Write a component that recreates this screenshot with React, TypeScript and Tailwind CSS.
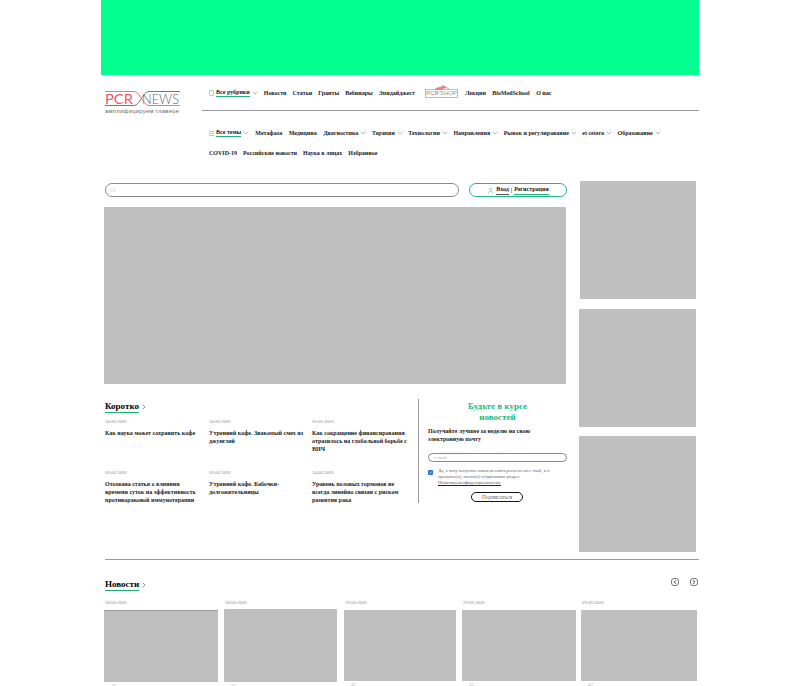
import {ChevronDown, ChevronLeft, ChevronRight, Search, User} from 'lucide-react';

const serif = {fontFamily: '"Liberation Serif", serif'};

const topNav = ['Новости', 'Статьи', 'Гранты', 'Вебинары', 'Эпидайджест'];
const topNavEnd = ['Лекции', 'BioMedSchool', 'О нас'];
const themes: [string, boolean][] = [
  ['Метафаза', false],
  ['Медицина', false],
  ['Диагностика', true],
  ['Терапия', true],
  ['Технологии', true],
  ['Направления', true],
  ['Рынок и регулирование', true],
  ['et cetera', true],
  ['Образование', true],
];
const extraNav = ['COVID-19', 'Российские новости', 'Наука в лицах', 'Избранное'];
const shortNews = [
  {date: '30.06.2026', title: 'Как наука может сохранить кофе'},
  {date: '30.06.2026', title: 'Утренний кофе. Знакомый смех из джунглей'},
  {date: '26.06.2026', title: 'Как сокращение финансирования отразилось на глобальной борьбе с ВИЧ'},
  {date: '26.06.2026', title: 'Отозвана статья о влиянии времени суток на эффективность противораковой иммунотерапии'},
  {date: '26.06.2026', title: 'Утренний кофе. Бабочки-долгожительницы'},
  {date: '24.06.2026', title: 'Уровень половых гормонов не всегда линейно связан с риском развития рака'},
];
const cards = [
  {date: '30.06.2026', cls: 'w-[114px] h-[72px] mt-0 border-t border-[#9a9a9a]', gap: 'mr-[6px]'},
  {date: '30.06.2026', cls: 'w-[113px] h-[73px] -mt-px rounded-[1px]', gap: 'mr-[7px]'},
  {date: '29.06.2026', cls: 'w-[112px] h-[71px] mt-0', gap: 'mr-[6px]'},
  {date: '29.06.2026', cls: 'w-[114px] h-[71px] mt-0', gap: 'mr-[5px]'},
  {date: '29.06.2026', cls: 'w-[116px] h-[71px] mt-0', gap: ''},
];

const Logo = () => (
  <svg width="76" height="24" viewBox="0 0 76 24" className="block">
    <path d="M0 1.5H29C35 1.5 38 15.5 44 15.5H75" fill="none" stroke="#f0656b" strokeWidth="0.9" />
    <path d="M0 15.5H29C35 15.5 38 1.5 44 1.5H75" fill="none" stroke="#666" strokeWidth="0.9" />
    <text x="0" y="13.5" fontFamily="Lato" fontSize="14" fill="#ee5560" textLength="28" lengthAdjust="spacingAndGlyphs">PCR</text>
    <text x="37" y="13.5" fontFamily="Lato" fontWeight="300" fontSize="14" fill="#666" textLength="37" lengthAdjust="spacingAndGlyphs">NEWS</text>
    <text x="0" y="22.5" fontFamily="Liberation Sans" fontSize="5.8" fill="#666" textLength="74" lengthAdjust="spacing">амплифицируем главное</text>
  </svg>
);

const ShopLogo = () => (
  <div className="relative w-[33px] h-[9px] border border-[#8fd4ab] flex items-center justify-center text-[6px] leading-none tracking-tight font-['Liberation_Sans'] font-normal text-[#999] ml-[10px] mr-[7px] shrink-0">
    <svg width="18" height="6" viewBox="0 0 18 6" className="absolute -top-[6px] left-[7px]">
      <path d="M1 6C4 2 8 4 10 1L13 3L17 5L12 4L8 6Z" fill="#ee7f88" />
    </svg>
    <span className="text-[#e6626b]">PC</span>
    <span className="text-[#3f8fd0]">R</span>
    <span>&nbsp;SHOP</span>
  </div>
);

const Chevron = () => <ChevronDown size={8} strokeWidth={1.1} className="text-[#333] ml-px shrink-0" />;

const Header = () => (
  <div className="flex pl-[4px]">
    <div className="w-[97px] pt-[15px] shrink-0"><Logo /></div>
    <div className="flex-1 min-w-0 text-[6px] leading-none font-bold text-[#1a1a2a] whitespace-nowrap">
      <div className="flex items-center h-[36px] border-b border-[#9a9a9a] pl-[7px] pt-[1px]">
        <span className="w-[5px] h-[6px] border border-[#9ed9b8] rounded-[1px] mr-[2px] shrink-0" />
        <span className="border-b border-[#1fae78] pb-px">Все рубрики</span>
        <Chevron />
        <div className="flex items-center gap-[6px] ml-[5px]">
          {topNav.map(item => <span key={item}>{item}</span>)}
        </div>
        <ShopLogo />
        <div className="flex items-center gap-[6.5px]">
          {topNavEnd.map(item => <span key={item}>{item}</span>)}
        </div>
      </div>
      <div className="flex items-center h-[10px] mt-[17px] pl-[7px]">
        <span className="flex flex-col gap-px w-[5px] mr-[2px] shrink-0">
          <i className="h-px bg-[#9ed9b8]" /><i className="h-px bg-[#9ed9b8]" /><i className="h-px bg-[#9ed9b8]" />
        </span>
        <span className="border-b border-[#1fae78] pb-px">Все темы</span>
        <Chevron />
        <div className="flex items-center gap-[6.5px] ml-[5px]">
          {themes.map(([name, more]) => (
            <span key={name} className={`flex items-center ${more ? '-mr-[2px]' : ''}`}>{name}{more && <Chevron />}</span>
          ))}
        </div>
      </div>
      <div className="flex items-center gap-[6px] h-[10px] mt-[10px] pl-[7px]">
        {extraNav.map(item => <span key={item}>{item}</span>)}
      </div>
    </div>
  </div>
);

const SideBoxes = () => (
  <div className="w-[117px] shrink-0 ml-[13px] mt-[23px]">
    <div className="h-[118px] ml-px bg-[#bfbfbf]" />
    <div className="h-[118px] mt-[10px] bg-[#bfbfbf]" />
    <div className="h-[116px] mt-[9px] bg-[#bfbfbf]" />
  </div>
);

const SectionTitle = ({title}: {title: string}) => (
  <div className="flex items-center">
    <span className="text-[9px] leading-[11px] font-bold text-black border-b border-[#1fae78]">{title}</span>
    <ChevronRight size={8} strokeWidth={1.5} className="ml-[1px] text-[#333]" />
  </div>
);

const Subscribe = () => (
  <div className="w-[148px] ml-[3px] border-l border-[#9a9a9a] pl-[9px] h-[104px] shrink-0">
    <div className="text-[9px] leading-[11px] font-bold text-[#19b97e] text-center pt-[2px] w-[139px]">
      Будьте в курсе<br />новостей
    </div>
    <div className="text-[6px] leading-[7.5px] font-bold text-[#222] mt-[5px]">
      Получайте лучшее за неделю на свою электронную почту
    </div>
    <div className="h-[9px] w-[139px] border border-[#888] rounded-full mt-[10px] text-[5px] leading-[7px] pl-[5px] text-[#aaa]">
      e-mail
    </div>
    <div className="flex mt-[6px]">
      <span className="w-[5px] h-[5px] bg-[#2f6fdc] rounded-[1px] shrink-0 mt-[2px] flex items-center justify-center text-white text-[4px] leading-none">✓</span>
      <div className="ml-[5px] text-[4.6px] leading-[6px] text-[#666] whitespace-nowrap">
        Да, я хочу получать новости сайта pcr.news по e-mail, и я<br />
        прочитал(а), понял(а) и принимаю раздел<br />
        <span className="border-b border-[#222] text-[#555]">Политика конфиденциальности.</span>
      </div>
    </div>
    <div className="w-[52px] h-[10px] mt-[6px] ml-[43px] border border-[#111] rounded-full text-center text-[5.5px] leading-[8px] text-[#666]">
      Подписаться
    </div>
  </div>
);

const MainColumn = () => (
  <div className="w-[462px] shrink-0 ml-[3px]">
    <div className="flex items-center mt-[25px] h-[14px]">
      <div className="w-[354px] h-[14px] ml-px shrink-0 border border-[#8a8a8a] rounded-full flex items-center pl-[4px] text-[#c4c4c4]">
        <Search size={6} strokeWidth={1.5} />
      </div>
      <div className="w-[98px] h-[14px] ml-[10px] shrink-0 border border-[#22b684] rounded-full flex items-center justify-center text-[6px] font-bold text-[#222] whitespace-nowrap">
        <User size={7} strokeWidth={1.4} className="text-[#22b684] mr-[2px]" />
        <span className="border-b border-[#555]">Вход</span>
        <span className="mx-[2px]">|</span>
        <span className="border-b border-[#22b684]">Регистрация</span>
      </div>
    </div>
    <div className="h-[177px] mt-[10px] bg-[#bfbfbf]" />
    <div className="flex mt-[15px]">
      <div className="w-[311px] pl-px shrink-0">
        <div className="pt-[2px]"><SectionTitle title="Коротко" /></div>
        <div className="grid grid-cols-[104px_103px_100px] mt-[6px]">
          {shortNews.map((item, i) => (
            <div key={item.title} className={`h-[51px] ${i === 3 ? 'pr-[8px]' : 'pr-[3px]'}`}>
              <div className="text-[4.8px] leading-[6px] text-[#888]">{item.date}</div>
              <div className="text-[6px] leading-[7.8px] font-bold text-[#1b1b22] mt-[5px]">{item.title}</div>
            </div>
          ))}
        </div>
      </div>
      <Subscribe />
    </div>
  </div>
);

const NewsRow = () => (
  <div className="ml-[3px]">
    <div className="flex items-center justify-between mt-[18px] pl-px pr-[1px] h-[13px]">
      <SectionTitle title="Новости" />
      <div className="flex gap-[11px] text-[#222] -mt-[5px]">
        <span className="w-[8px] h-[8px] border border-[#777] rounded-[3px] flex items-center justify-center"><ChevronLeft size={6} strokeWidth={3.5} className="shrink-0" /></span>
        <span className="w-[8px] h-[8px] border border-[#777] rounded-[3px] flex items-center justify-center"><ChevronRight size={6} strokeWidth={3.5} className="shrink-0" /></span>
      </div>
    </div>
    <div className="flex mt-[9px]">
      {cards.map((card, i) => (
        <div key={i} className={`shrink-0 ${card.gap}`}>
          <div className="text-[4.8px] leading-[6px] text-[#888] pl-px h-[7px] mb-[3px]">{card.date}</div>
          <div className={`bg-[#bfbfbf] ${card.cls}`} />
          <div className="text-[4.8px] leading-[6px] text-[#aaa] pl-[7px] mt-[1px]">{i % 2 ? '55' : '47'}</div>
        </div>
      ))}
    </div>
  </div>
);

export default function App() {
  return (
    <div className="h-screen overflow-hidden bg-white" style={serif}>
      <div className="w-[598px] ml-[101px]">
        <div className="h-[75px] bg-[#00ff8f]" />
        <Header />
        <div className="flex">
          <MainColumn />
          <SideBoxes />
        </div>
        <div className="h-px bg-[#9a9a9a] ml-[4px] mt-[7px]" />
        <NewsRow />
      </div>
    </div>
  );
}
